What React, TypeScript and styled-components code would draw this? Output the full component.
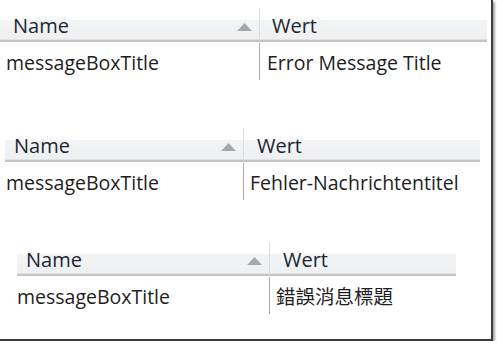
import styled, { createGlobalStyle } from 'styled-components';

const GlobalStyle = createGlobalStyle`
  html, body {
    margin: 0;
    padding: 0;
    background: #ffffff;
  }
  body {
    font-family: 'Open Sans', 'Noto Sans CJK TC', sans-serif;
  }
`;

const Frame = styled.div`
  width: 491px;
  height: 339px;
  background: #fff;
  border-right: 2px solid #3c3c3c;
  border-bottom: 2px solid #3c3c3c;
  box-shadow: 2px 2px 2px rgba(0, 0, 0, 0.35);
  display: flex;
  flex-direction: column;
`;

const Table = styled.div<{ left: number; width: number; nameWidth: number; top: number }>`
  margin-top: ${(p) => p.top}px;
  margin-left: ${(p) => p.left}px;
  width: ${(p) => p.width}px;
  display: grid;
  grid-template-columns: ${(p) => p.nameWidth}px 1fr;
`;

const HeaderCell = styled.div<{ pad: number; divider?: boolean }>`
  height: 32px;
  box-sizing: border-box;
  padding-left: ${(p) => p.pad}px;
  padding-right: 7px;
  padding-bottom: 2px;
  display: flex;
  align-items: flex-end;
  justify-content: space-between;
  background: linear-gradient(to bottom, #ffffff 0, #ffffff 12px, #f3f4f6 12px, #eef0f2 100%);
  border-right: ${(p) => (p.divider ? '1px solid #dcdde0' : 'none')};
  border-bottom: 1px solid #e2e2e2;
  box-shadow: 0 2px 0 #c6c6c6;
  margin-bottom: 3px;
  font-size: 20px;
  line-height: 22px;
  color: #1c2733;
`;

const SortArrow = styled.svg`
  width: 15px;
  height: 8px;
  margin-bottom: 6px;
`;

const Cell = styled.div<{ pad: number; divider?: boolean }>`
  height: 37px;
  box-sizing: border-box;
  padding-left: ${(p) => p.pad}px;
  padding-top: 7px;
  border-right: ${(p) => (p.divider ? '1px solid #a9a9a9' : 'none')};
  font-size: 19.5px;
  line-height: 26px;
  color: #1e1e1e;
  white-space: nowrap;
`;

interface TableSpec {
  top: number;
  left: number;
  width: number;
  nameWidth: number;
  namePad: number;
  wertPad: number;
  keyPad: number;
  valuePad: number;
  value: string;
}

const tables: TableSpec[] = [
  { top: 8, left: 0, width: 487, nameWidth: 260, namePad: 13, wertPad: 12, keyPad: 6, valuePad: 7, value: 'Error Message Title' },
  { top: 48, left: 5, width: 475, nameWidth: 239, namePad: 9, wertPad: 13, keyPad: 1, valuePad: 6, value: 'Fehler-Nachrichtentitel' },
  { top: 42, left: 17, width: 439, nameWidth: 253, namePad: 9, wertPad: 13, keyPad: 0, valuePad: 6, value: '錯誤消息標題' },
];

export default function App() {
  return (
    <>
      <GlobalStyle />
      <Frame>
        {tables.map((t, idx) => (
          <Table key={idx} top={t.top} left={t.left} width={t.width} nameWidth={t.nameWidth}>
            <HeaderCell pad={t.namePad} divider>
              <span>Name</span>
              <SortArrow viewBox="0 0 15 8">
                <polygon points="7.5,0 15,8 0,8" fill="#a6a8ab" />
              </SortArrow>
            </HeaderCell>
            <HeaderCell pad={t.wertPad}>
              <span>Wert</span>
            </HeaderCell>
            <Cell pad={t.keyPad} divider>messageBoxTitle</Cell>
            <Cell pad={t.valuePad}>{t.value}</Cell>
          </Table>
        ))}
      </Frame>
    </>
  );
}
